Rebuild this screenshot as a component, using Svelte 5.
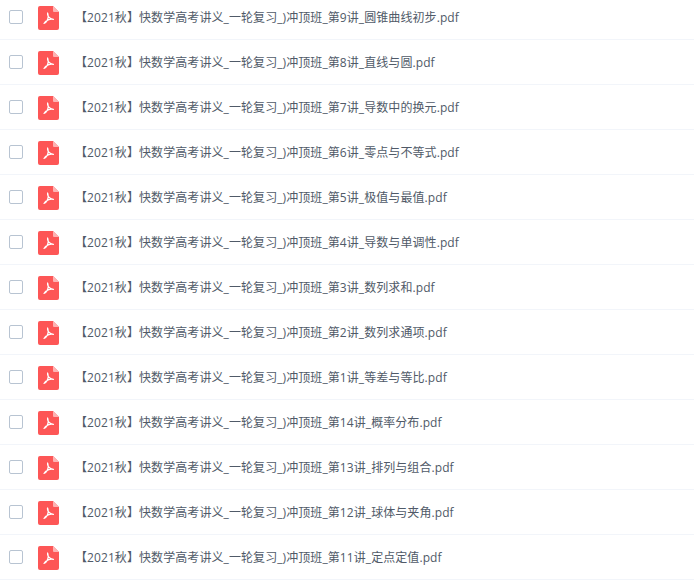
<script>
  const titles = ['第9讲_圆锥曲线初步','第8讲_直线与圆','第7讲_导数中的换元','第6讲_零点与不等式','第5讲_极值与最值','第4讲_导数与单调性','第3讲_数列求和','第2讲_数列求通项','第1讲_等差与等比','第14讲_概率分布','第13讲_排列与组合','第12讲_球体与夹角','第11讲_定点定值'];
</script>

<div class="list">
  {#each titles as t}
    <div class="row">
      <span class="check"></span>
      <svg class="icon" viewBox="0 0 21 24" width="21" height="24" aria-hidden="true">
        <path d="M2 0H15L21 6V22a2 2 0 0 1-2 2H2a2 2 0 0 1-2-2V2a2 2 0 0 1 2-2Z" fill="#fd5656"/>
        <path d="M15 0L21 6H16a1 1 0 0 1-1-1Z" fill="#fdb4b4"/>
        <path d="M9.600 7c-.7 2.600 1.600 5.600 5.800 6.300-3-.6-7.800.6-9.400 4.200 2.400-.6 4.300-4.400 4.200-7.500-.1-1.300-.2-2.300-.6-3Z" fill="none" stroke="#fff" stroke-width="1.200" stroke-linejoin="round"/>
      </svg>
      <span class="name">【2021秋】快数学高考讲义_一轮复习_)冲顶班_{t}.pdf</span>
    </div>
  {/each}
</div>

<style>
  :global(body) {
    margin: 0;
    background: #fff;
  }
  .list {
    display: flex;
    flex-direction: column;
    margin-top: -5px;
  }
  .row {
    display: flex;
    align-items: center;
    height: 44px;
    border-bottom: 1px solid #f2f5fa;
    padding-left: 9px;
  }
  .check {
    width: 12px;
    height: 12px;
    border: 1px solid #b8c4d2;
    border-radius: 2px;
    flex: none;
  }
  .icon {
    margin-left: 15px;
    margin-top: 2px;
    flex: none;
  }
  .name {
    margin-left: 16px;
    margin-top: 2px;
    font: 12px/18px "Open Sans", "Noto Sans CJK SC", sans-serif;
    letter-spacing: 0.08px;
    color: #505a68;
    white-space: nowrap;
  }
</style>
